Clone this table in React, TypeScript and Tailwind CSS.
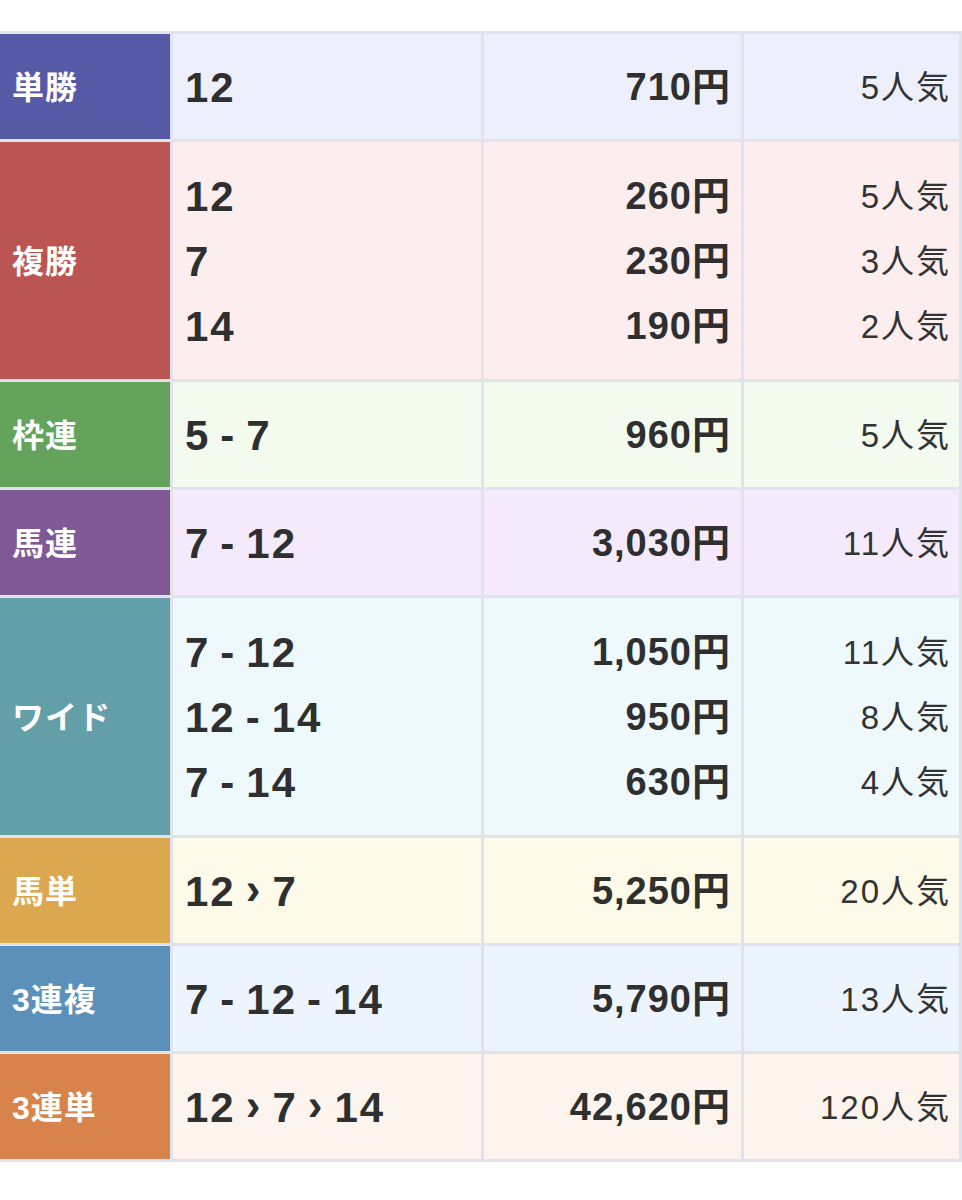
import React from 'react';

type Line = { combo: string[]; sep?: '-' | '>'; yen: string; pop: string };
type Bet = { label: string; labelBg: string; cellBg: string; lines: Line[] };

const bets: Bet[] = [
  { label: '単勝', labelBg: 'bg-[#565aa6]', cellBg: 'bg-[#edf0fc]', lines: [{ combo: ['12'], yen: '710', pop: '5' }] },
  {
    label: '複勝',
    labelBg: 'bg-[#bb5553]',
    cellBg: 'bg-[#fcedee]',
    lines: [
      { combo: ['12'], yen: '260', pop: '5' },
      { combo: ['7'], yen: '230', pop: '3' },
      { combo: ['14'], yen: '190', pop: '2' },
    ],
  },
  { label: '枠連', labelBg: 'bg-[#63a35c]', cellBg: 'bg-[#f2fbee]', lines: [{ combo: ['5', '7'], sep: '-', yen: '960', pop: '5' }] },
  { label: '馬連', labelBg: 'bg-[#7f5995]', cellBg: 'bg-[#f5eafc]', lines: [{ combo: ['7', '12'], sep: '-', yen: '3,030', pop: '11' }] },
  {
    label: 'ワイド',
    labelBg: 'bg-[#629fa8]',
    cellBg: 'bg-[#edf9fc]',
    lines: [
      { combo: ['7', '12'], sep: '-', yen: '1,050', pop: '11' },
      { combo: ['12', '14'], sep: '-', yen: '950', pop: '8' },
      { combo: ['7', '14'], sep: '-', yen: '630', pop: '4' },
    ],
  },
  { label: '馬単', labelBg: 'bg-[#dca84f]', cellBg: 'bg-[#fefae9]', lines: [{ combo: ['12', '7'], sep: '>', yen: '5,250', pop: '20' }] },
  { label: '3連複', labelBg: 'bg-[#5b90ba]', cellBg: 'bg-[#ecf4fd]', lines: [{ combo: ['7', '12', '14'], sep: '-', yen: '5,790', pop: '13' }] },
  { label: '3連単', labelBg: 'bg-[#d8834b]', cellBg: 'bg-[#fdf5ed]', lines: [{ combo: ['12', '7', '14'], sep: '>', yen: '42,620', pop: '120' }] },
];

const font = 'font-["Liberation_Sans","Noto_Sans_CJK_JP",sans-serif]';

// a combination such as 7 - 12 - 14 or 12 › 7 › 14
const Combo: React.FC<{ line: Line }> = ({ line }) => (
  <span className="flex items-center">
    {line.combo.map((n, i) => (
      <React.Fragment key={i}>
        {i > 0 &&
          (line.sep === '>' ? (
            <span className="mx-[10px] text-[44px] font-bold leading-none -translate-y-[3px]">›</span>
          ) : (
            <span className="mx-[10px]">-</span>
          ))}
        <span>{n}</span>
      </React.Fragment>
    ))}
  </span>
);

const Row: React.FC<{ bet: Bet }> = ({ bet }) => {
  const h = bet.lines.length > 1 ? 'h-[237px]' : 'h-[105px]';
  const cell = `${bet.cellBg} ${h} flex flex-col justify-center`;
  return (
    <div className="grid grid-cols-[170px_308px_257px_215px] gap-x-[3px]">
      <div className={`${bet.labelBg} ${h} flex items-center pl-[12px] pt-[3px] text-white text-[32px] font-bold tracking-[1px]`}>
        {bet.label}
      </div>
      <div className={`${cell} pl-[12px] text-[42px] font-bold tracking-[2px] text-[#2f2f2f]`}>
        {bet.lines.map((l, i) => (
          <div key={i} className="h-[65px] flex items-center pt-[2px]">
            <Combo line={l} />
          </div>
        ))}
      </div>
      <div className={`${cell} pr-[10px] text-[38px] font-bold tracking-[1px] text-[#2f2f2f]`}>
        {bet.lines.map((l, i) => (
          <div key={i} className="h-[65px] flex items-center justify-end pt-[2px]">
            {l.yen}円
          </div>
        ))}
      </div>
      <div className={`${cell} pr-[8px] text-[33px] text-[#333] tracking-[2px]`}>
        {bet.lines.map((l, i) => (
          <div key={i} className="h-[65px] flex items-center justify-end pt-[2px]">
            {l.pop}人気
          </div>
        ))}
      </div>
    </div>
  );
};

export default function App() {
  return (
    <div className={`${font} bg-white w-[962px] h-[1200px] pt-[31px]`}>
      <div className="bg-[#e2e3ea] pt-[3px] pb-[3px] pr-[3px] flex flex-col gap-y-[3px]">
        {bets.map((b) => (
          <Row key={b.label} bet={b} />
        ))}
      </div>
    </div>
  );
}
